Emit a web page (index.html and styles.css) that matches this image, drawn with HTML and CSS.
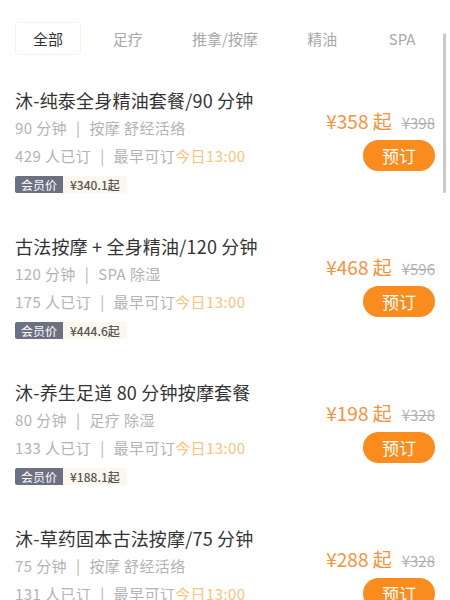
FILE: index.html
```html
<html>
  <head>
    <meta charset="utf-8">
    <title>Service list</title>
    <link rel="stylesheet" href="styles.css">
  </head>
  <body>
    <div class="tabs">
      <span class="tab active">全部</span>
      <span class="tab">足疗</span>
      <span class="tab">推拿/按摩</span>
      <span class="tab">精油</span>
      <span class="tab">SPA</span>
    </div>
    <div class="scrollbar"></div>
    <div class="list">
      <div class="item">
        <div class="info">
          <p class="name">沐-纯泰全身精油套餐/90 分钟</p>
          <p class="meta">90 分钟<span class="sep">|</span>按摩 舒经活络</p>
          <p class="meta">429 人已订<span class="sep">|</span>最早可订<span class="soon">今日13:00</span></p>
          <p class="member"><span class="tag">会员价</span><span class="mprice">¥340.1起</span></p>
        </div>
        <div class="buy">
          <p class="price"><span class="now">¥358 起</span><s class="old">¥398</s></p>
          <button type="button" class="book">预订</button>
        </div>
      </div>
      <div class="item">
        <div class="info">
          <p class="name">古法按摩 + 全身精油/120 分钟</p>
          <p class="meta">120 分钟<span class="sep">|</span>SPA 除湿</p>
          <p class="meta">175 人已订<span class="sep">|</span>最早可订<span class="soon">今日13:00</span></p>
          <p class="member"><span class="tag">会员价</span><span class="mprice">¥444.6起</span></p>
        </div>
        <div class="buy">
          <p class="price"><span class="now">¥468 起</span><s class="old">¥596</s></p>
          <button type="button" class="book">预订</button>
        </div>
      </div>
      <div class="item">
        <div class="info">
          <p class="name">沐-养生足道 80 分钟按摩套餐</p>
          <p class="meta">80 分钟<span class="sep">|</span>足疗 除湿</p>
          <p class="meta">133 人已订<span class="sep">|</span>最早可订<span class="soon">今日13:00</span></p>
          <p class="member"><span class="tag">会员价</span><span class="mprice">¥188.1起</span></p>
        </div>
        <div class="buy">
          <p class="price"><span class="now">¥198 起</span><s class="old">¥328</s></p>
          <button type="button" class="book">预订</button>
        </div>
      </div>
      <div class="item">
        <div class="info">
          <p class="name">沐-草药固本古法按摩/75 分钟</p>
          <p class="meta">75 分钟<span class="sep">|</span>按摩 舒经活络</p>
          <p class="meta">131 人已订<span class="sep">|</span>最早可订<span class="soon">今日13:00</span></p>
          <p class="member"><span class="tag">会员价</span><span class="mprice">¥272.1起</span></p>
        </div>
        <div class="buy">
          <p class="price"><span class="now">¥288 起</span><s class="old">¥328</s></p>
          <button type="button" class="book">预订</button>
        </div>
      </div>
    </div>
  </body>
</html>
```

FILE: styles.css
```css
body {
    margin: 0;
    background: #fff;
    color: #333;
    font-family: "Noto Sans CJK SC", "Noto Sans", sans-serif;
}
p { margin: 0 }

.tabs {
    display: flex;
    gap: 14px;
    padding: 22px 15px 0;
    margin-bottom: 12px;
}
.tab {
    width: 66px;
    height: 33px;
    box-sizing: border-box;
    display: flex;
    align-items: center;
    justify-content: center;
    font-size: 15px;
    color: #a8a8a8;
    white-space: nowrap;
}
.tab.active {
    color: #333;
    border: 1px solid #f6f2e4;
    border-radius: 3px;
}
.tab:nth-child(3) { width: 101px }

.scrollbar {
    position: absolute;
    left: 443px;
    top: 33px;
    width: 3px;
    height: 160px;
    border-radius: 2px;
    background: #c9c9c9;
}

.item {
    display: flex;
    align-items: center;
    justify-content: space-between;
    padding: 19px 15px 20px;
}
.name {
    font-size: 18px;
    line-height: 28px;
    color: #333;
    white-space: nowrap;
    letter-spacing: 0.2px;
}
.meta {
    font-size: 15px;
    line-height: 28px;
    color: #b3b3b3;
    white-space: nowrap;
    letter-spacing: 0.4px;
}
.sep { margin: 0 9px }
.soon { color: #f9c37d }
.member {
    display: flex;
    margin-top: 6px;
    height: 17px;
    font-size: 12px;
    line-height: 17px;
}
.tag {
    background: #6c7083;
    color: #fff;
    padding: 0 6px;
    border-radius: 2px 0 0 2px;
}
.mprice {
    background: #fcf7ec;
    color: #555;
    font-weight: 500;
    padding: 0 7px;
}

.buy {
    display: flex;
    flex-direction: column;
    align-items: flex-end;
    gap: 5px;
}
.price {
    line-height: 24px;
    white-space: nowrap;
}
.now {
    font-size: 19px;
    color: #f5923c;
}
.old {
    font-size: 15px;
    color: #b0b0b0;
    margin-left: 10px;
}
.book {
    width: 72px;
    height: 31px;
    border: 0;
    border-radius: 16px;
    background: #f98c1d;
    color: #fff;
    font-family: inherit;
    font-size: 17px;
    padding: 0;
}
```
